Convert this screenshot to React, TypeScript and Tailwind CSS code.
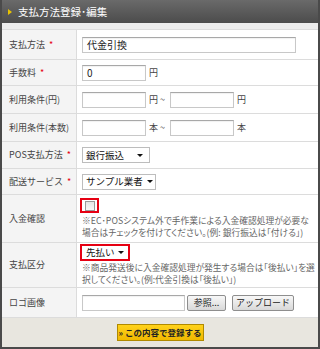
import React from "react";

const font = { fontFamily: '"Noto Sans CJK JP", "Noto Sans", sans-serif' };

const inputCls =
  "h-[16px] border border-[#c8c8c8] border-t-[#a8a8a8] bg-white px-1 text-[10px] leading-[14px] text-[#222] shadow-[inset_0_1px_1px_rgba(0,0,0,0.06)]";

const selectCls =
  "flex h-[16px] items-center gap-[4px] whitespace-nowrap border border-[#bdbdbd] bg-white pl-[3px] pr-[6px] text-[9.5px] text-[#111]";

function Req() {
  return <span className="ml-[4px] text-[#e60012]">*</span>;
}

function Arrow() {
  return (
    <svg width="6" height="3" viewBox="0 0 6 3" className="ml-auto shrink-0">
      <path d="M0 0 L6 0 L3 3 Z" fill="#111" />
    </svg>
  );
}

function Row({
  label,
  req,
  h,
  children,
}: {
  label: string;
  req?: boolean;
  h: string;
  children: React.ReactNode;
}) {
  return (
    <div className={`flex border-b border-[#dcdcdc] ${h}`}>
      <div className="flex w-[75px] shrink-0 items-center whitespace-nowrap border-r border-[#dcdcdc] bg-[#f4f4f4] pl-[7px] text-[9px] text-[#444]">
        {label}
        {req && <Req />}
      </div>
      <div className="flex flex-1 flex-col items-start justify-center bg-white pl-[5px]">{children}</div>
    </div>
  );
}

export default function App() {
  return (
    <div
      className="flex h-[349px] w-[320px] flex-col border-2 border-t-0 border-[#4a4a4a] bg-[#ececec]"
      style={font}
    >
      {/* header */}
      <div className="flex h-[23px] shrink-0 items-center bg-gradient-to-b from-[#6a6a6a] to-[#4c4c4c] pl-[6px]">
        <svg width="4" height="6" viewBox="0 0 4 6">
          <path d="M0 0 L4 3 L0 6 Z" fill="#e8c300" />
        </svg>
        <span className="ml-[6px] text-[10.5px] text-white">支払方法登録･編集</span>
      </div>
      <div className="h-[6px] shrink-0 bg-[#ececec]" />

      <div className="flex flex-col border-t border-[#dcdcdc] bg-white">
        <Row label="支払方法" req h="h-[30px]">
          <div className={`${inputCls} flex w-[214px] items-center`}>代金引換</div>
        </Row>
        <Row label="手数料" req h="h-[26px]">
          <div className="flex items-center text-[9px] text-[#444]">
            <div className={`${inputCls} flex w-[64px] items-center`}>0</div>
            <span className="ml-[3px]">円</span>
          </div>
        </Row>
        <Row label="利用条件(円)" h="h-[28px]">
          <div className="flex items-center text-[9px] text-[#444]">
            <div className={`${inputCls} w-[64px]`} />
            <span className="ml-[3px]">円 ~</span>
            <div className={`${inputCls} ml-[5px] w-[64px]`} />
            <span className="ml-[3px]">円</span>
          </div>
        </Row>
        <Row label="利用条件(本数)" h="h-[28px]">
          <div className="flex items-center text-[9px] text-[#444]">
            <div className={`${inputCls} w-[64px]`} />
            <span className="ml-[3px]">本 ~</span>
            <div className={`${inputCls} ml-[5px] w-[64px]`} />
            <span className="ml-[3px]">本</span>
          </div>
        </Row>
        <Row label="POS支払方法" req h="h-[27px]">
          <div className={`${selectCls} w-[68px]`}>
            銀行振込
            <Arrow />
          </div>
        </Row>
        <Row label="配送サービス" req h="h-[26px]">
          <div className={`${selectCls} w-[74px]`}>
            サンプル業者
            <Arrow />
          </div>
        </Row>
        <Row label="入金確認" h="h-[48px]">
          <div className="ml-[-2px] flex h-[15px] w-[19px] items-center justify-center border-2 border-[#e60012] bg-white">
            <div className="h-[10px] w-[10px] border border-[#9a9a9a] bg-gradient-to-b from-[#e6e6e6] to-[#f8f8f8]" />
          </div>
          <p className="mt-[2px] whitespace-nowrap text-[8.75px] leading-[12px] text-[#666] [font-feature-settings:'palt']">
            ※EC･POSシステム外で手作業による入金確認処理が必要な
            <br />
            場合はチェックを付けてください。(例: 銀行振込は「付ける」)
          </p>
        </Row>
        <Row label="支払区分" h="h-[45px]">
          <div className="ml-[-2px] flex h-[17px] w-[50px] items-center gap-[3px] whitespace-nowrap border-2 border-[#e60012] bg-white pl-[4px] pr-[6px] text-[9.5px] text-[#111]">
            先払い
            <Arrow />
          </div>
          <p className="mt-[1px] whitespace-nowrap text-[8.75px] leading-[12px] text-[#666] [font-feature-settings:'palt']">
            ※商品発送後に入金確認処理が発生する場合は「後払い」を選
            <br />
            択してください。(例:代金引換は「後払い」)
          </p>
        </Row>
        <Row label="ロゴ画像" h="h-[30px]">
          <div className="flex items-center">
            <div className={`${inputCls} w-[103px]`} />
            <div className="ml-[2px] flex h-[16px] w-[39px] items-center justify-center rounded-[2px] border border-[#8e8e8e] bg-gradient-to-b from-[#f8f8f8] to-[#d8d8d8] text-[9px] text-[#222]">
              参照...
            </div>
            <div className="ml-[6px] flex h-[16px] w-[62px] items-center justify-center rounded-[2px] border border-[#8e8e8e] bg-gradient-to-b from-[#f8f8f8] to-[#d8d8d8] text-[9px] text-[#222]">
              アップロード
            </div>
          </div>
        </Row>
      </div>

      {/* footer */}
      <div className="flex flex-1 items-center justify-center bg-[#e8e6df]">
        <div className="flex h-[17px] w-[87px] items-center justify-center whitespace-nowrap border border-[#b08a00] bg-gradient-to-b from-[#ffd21a] to-[#f0b800] text-[8.5px] font-bold text-[#222]">
          » この内容で登録する
        </div>
      </div>
    </div>
  );
}
